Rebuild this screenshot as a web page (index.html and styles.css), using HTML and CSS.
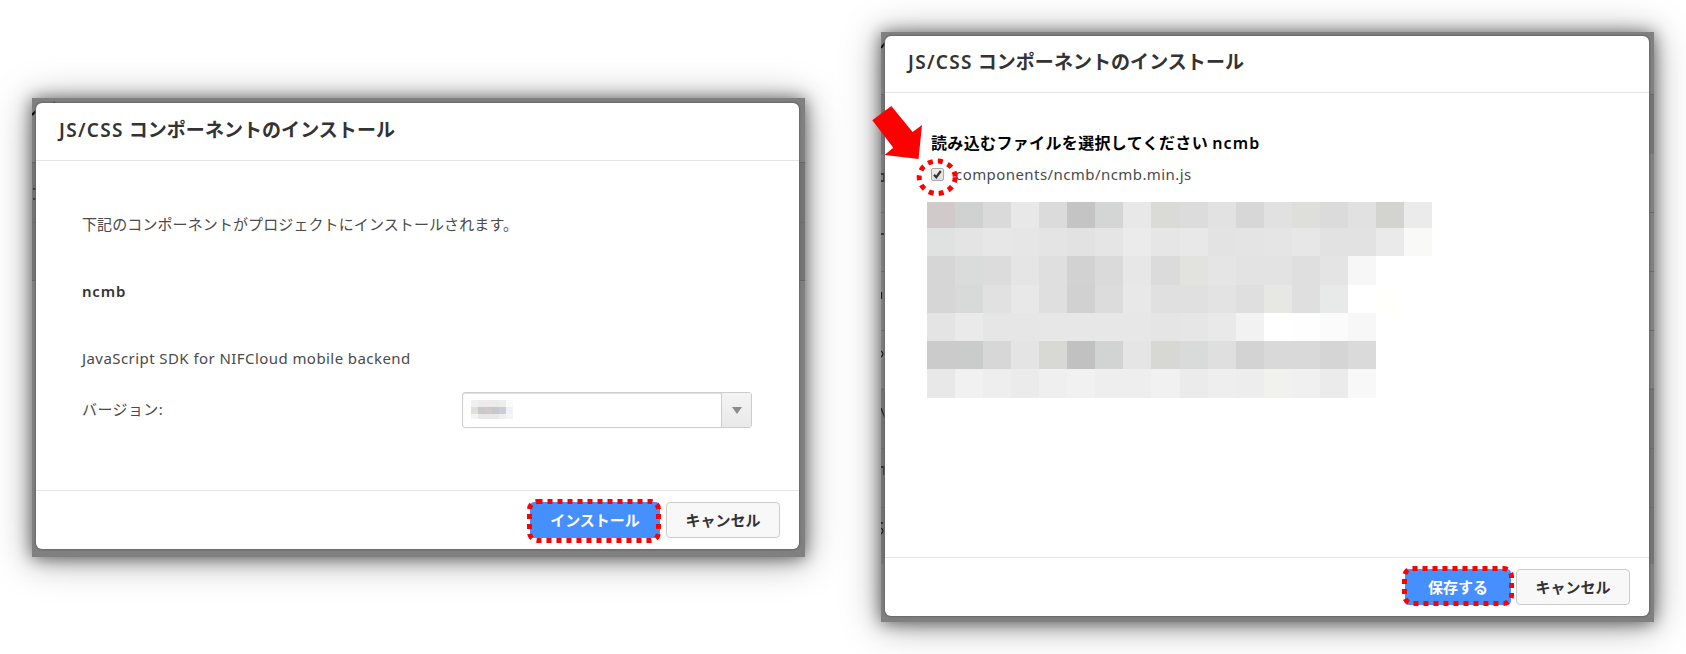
FILE: index.html
```html
<!DOCTYPE html>
<html lang="ja">
<head>
<meta charset="utf-8">
<title>JS/CSS コンポーネントのインストール</title>
<link rel="stylesheet" href="styles.css">
</head>
<body>
<section class="frame frame-install">
  <svg class="behind" width="30" height="110" viewBox="0 0 30 110"><path d="M0 17L4 13M21.500 4L23 6" stroke="#000" stroke-width="2"/><path d="M1 91H4M1 101H4" stroke="#000"/></svg>
  <div class="dialog">
    <header class="head"><h1><span class="lat">JS/CSS</span> <span class="jp">コンポーネントのインストール</span></h1></header>
    <main class="body install-body">
      <p class="message">下記のコンポーネントがプロジェクトにインストールされます。</p>
      <p class="package">ncmb</p>
      <p class="summary">JavaScript SDK for NIFCloud mobile backend</p>
      <div class="version">
        <span class="version-label">バージョン:</span>
        <div class="select">
          <div class="value">
            <svg width="58" height="20" viewBox="0 0 58 20" shape-rendering="crispEdges">
              <path fill="#f0f0f0" d="M0 1h7v7H0z"/><path fill="#ebebeb" d="M7 1h21v7H7z"/><path fill="#eee" d="M28 1h7v7h-7z"/><path fill="#fafafa" d="M35 1h7v7h-7z"/>
              <path fill="#e1ddd7" d="M0 8h7v7H0z"/><path fill="#c9c9c9" d="M7 8h7v7H7z"/><path fill="#cfcac8" d="M14 8h7v7h-7z"/><path fill="#c6c8cc" d="M21 8h7v7h-7z"/><path fill="#cbccd5" d="M28 8h7v7h-7z"/><path fill="#f0f1f8" d="M35 8h7v7h-7z"/>
              <path fill="#f0f0f0" d="M0 15h7v5H0zM35 15h7v5h-7z" opacity=".7"/><path fill="#e8e8e8" d="M7 15h21v5H7z"/><path fill="#eeeef1" d="M28 15h7v5h-7z"/>
            </svg>
          </div>
          <div class="drop"><svg width="10" height="7" viewBox="0 0 10 7"><path fill="#8c8c8c" d="M0 0H10L5 7z"/></svg></div>
        </div>
      </div>
    </main>
    <footer class="foot">
      <button class="btn primary install">インストール<svg class="mark" width="136" height="46" viewBox="0 0 136 46"><rect x="3.5" y="3.5" width="129" height="39" rx="8"/></svg></button>
      <button class="btn cancel">キャンセル</button>
    </footer>
  </div>
</section>

<section class="frame frame-files">
  <svg class="behind" width="8" height="560" viewBox="0 0 8 560"><path d="M0 16L4 11" stroke="#000" stroke-width="2"/><g fill="none" stroke="#16191d" stroke-width="1.3"><path d="M0 142H3V149H0M0 202H3M.5 260V267M0 319Q4 322 0 325M0 376L4 386M0 435H4M3 436V443M0 491H2M0 496Q4 499 0 502"/></g></svg>
  <div class="dialog">
    <header class="head"><h1><span class="lat">JS/CSS</span> <span class="jp">コンポーネントのインストール</span></h1></header>
    <main class="body files-body">
      <h2><span class="jp">読み込むファイルを選択してください</span> <span class="lat">ncmb</span></h2>
      <label class="file">
        <svg class="check" width="13" height="13" viewBox="0 0 13 13"><defs><linearGradient id="box" x2="0" y2="1"><stop stop-color="#eee"/><stop offset="1" stop-color="#ddd"/></linearGradient></defs><rect x=".5" y=".5" width="12" height="12" rx="1.5" fill="url(#box)" stroke="#a9a9a9"/><path d="M3 6.8L5.3 9.2L9.8 3" fill="none" stroke="#333" stroke-width="2.2"/></svg>
        <span>components/ncmb/ncmb.min.js</span>
      </label>
      <svg class="mosaic" width="505" height="196" viewBox="0 0 504 196" preserveAspectRatio="none" shape-rendering="crispEdges"></svg>
    </main>
    <footer class="foot">
      <button class="btn primary save">保存する<svg class="mark" width="114" height="42" viewBox="0 0 114 42"><rect x="3.5" y="3.5" width="107" height="35" rx="8"/></svg></button>
      <button class="btn cancel">キャンセル</button>
    </footer>
  </div>
  <svg class="callout" width="90" height="110" viewBox="870 100 90 110"><path fill="red" d="M872.3 120.3L891.3 106L912.6 132L922 125L918.5 159L884.5 155L893.3 147.7Z"/><ellipse cx="937.2" cy="177.3" rx="18" ry="16.2" fill="none" stroke="red" stroke-width="5" stroke-dasharray="5 5.1"/></svg>
</section>
<script src="mosaic.js"></script>
</body>
</html>
```

FILE: styles.css
```css
* { box-sizing: border-box; }
body {
  margin: 0;
  height: 654px;
  overflow: hidden;
  background: #fff;
  display: flex;
  align-items: flex-start;
  font-family: "Noto Sans", "Noto Sans CJK JP", sans-serif;
  color: #4a4a4a;
}
h1, h2, p { margin: 0; white-space: nowrap; }
.frame {
  position: relative;
  flex: none;
  width: 773px;
  background: #808080;
  box-shadow: 0 1px 16px rgba(0, 0, 0, .55), 0 3px 36px rgba(0, 0, 0, .34);
}
.frame-install {
  height: 459px;
  margin: 98px 0 0 32px;
  padding: 5px 6px 8px 4px;
  background: linear-gradient(#808080 64px, #666 64px, #666 65px, #747474 65px, #747474 124px, #6c6c6c 124px, #6c6c6c 125px, #747474 125px, #747474 182px, #666 182px, #666 183px, #808080 183px);
}
.frame-files {
  height: 590px;
  margin: 32px 0 0 76px;
  padding: 4px 5px 6px 4px;
  background:
    repeating-linear-gradient(transparent 0 58px, #6a6a6a 58px 59px) 0 122px / 100% 412px no-repeat,
    linear-gradient(#808080 62px, #6a6a6a 62px, #6a6a6a 63px, #747474 63px, #747474 122px, #808080 122px, #808080 356px, #747474 356px, #747474 532px, #808080 532px);
}
.behind { position: absolute; left: 0; top: 0; }
.dialog {
  position: relative;
  height: 100%;
  display: flex;
  flex-direction: column;
  background: #fff;
  border-radius: 6px;
  box-shadow: 0 0 2px 1px #666;
}
.head {
  height: 57px;
  flex: none;
  padding: 0 0 0 23px;
  border-bottom: 1px solid #e5e5e5;
}
.frame-install .head { height: 58px; }
h1 { font-size: 19px; line-height: 54px; font-weight: 600; color: #333; }
.frame-files h1 { line-height: 52px; }
h1 .lat { letter-spacing: 1.3px; }
h1 .jp { letter-spacing: .05px; }
.body { flex: 1; min-height: 0; }
.install-body { padding: 48px 47px 0 46px; font-size: 15px; }
.message { line-height: 30px; letter-spacing: .1px; }
.package { margin-top: 37px; line-height: 30px; font-weight: 600; color: #333; letter-spacing: .8px; }
.summary { margin-top: 37px; line-height: 30px; letter-spacing: .43px; }
.version { margin-top: 19px; display: flex; justify-content: space-between; align-items: center; }
.version-label { margin-top: -4px; letter-spacing: .4px; }
.select {
  width: 290px;
  height: 36px;
  display: flex;
  border: 1px solid #ccc;
  border-radius: 3px;
  box-shadow: inset 0 1px 1px #ddd;
}
.value { flex: 1; padding: 6px 0 0 8px; }
.value svg { display: block; }
.drop {
  width: 30px;
  display: flex;
  align-items: center;
  justify-content: center;
  border-left: 1px solid #ccc;
  background: linear-gradient(#f4f4f4, #e9e9e9);
}
.foot {
  flex: none;
  height: 59px;
  border-top: 1px solid #e5e5e5;
  padding: 11px 19px 0 0;
  display: flex;
  justify-content: flex-end;
  align-items: flex-start;
  gap: 6px;
}
.frame-files .foot { gap: 5px; }
.btn {
  position: relative;
  height: 36px;
  padding: 0;
  border: 1px solid #ccc;
  border-radius: 4px;
  background: #f8f8f8;
  color: #333;
  font: 600 15px/32px "Noto Sans", "Noto Sans CJK JP", sans-serif;
  white-space: nowrap;
}
.cancel { width: 114px; }
.primary { background: #468fff; border-color: #468fff; color: #fff; }
.install { width: 130px; }
.save { width: 106px; }
.mark { position: absolute; left: -5px; top: -5px; overflow: visible; }
.mark rect { fill: none; stroke: red; stroke-width: 5; stroke-dasharray: 5 5; }
.files-body { padding: 35px 0 0 43px; }
h2 { font-size: 16px; line-height: 30px; font-weight: 600; color: #000; padding-left: 3px; }
h2 .jp { letter-spacing: .35px; }
h2 .lat { letter-spacing: 1.2px; }
.file { display: flex; align-items: center; gap: 11px; height: 32px; padding-left: 3px; font-size: 15px; letter-spacing: .43px; }
.check { flex: none; }
.mosaic { display: block; margin: 12px 0 0 -1px; }
.callout { position: absolute; left: -11px; top: 68px; }
```

FILE: mosaic.js
```javascript
// Pixelated rows: one colour per 28px cell.
const rows = [
  [0, 26, "d0caca d0d2d1 dadada e8e8e8 dbdbdb c4c4c4 d4d6d5 e8e8e8 dadad7 dcdcdc e2e2e2 d7d7d7 e1e1e1 dededa dbdbdb e1e1e1 d3d3d0 ebebeb"],
  [26, 28, "dfe2e1 e4e4e4 e7e7e7 e6e6e6 e4e4e4 e2e2e2 e5e5e5 ebebeb e6e6e6 e8e8e8 e3e3e3 e4e4e4 e5e5e5 e7e7e7 e2e2e2 e2e2e2 eaeaea f9f9f7"],
  [54, 29, "d6d6d6 dadcdb dcdcdc e5e5e5 dfdfdf d2d2d2 dadada e7e7e7 dbdbdb e2e2df e5e5e5 e3e3e3 e3e3e3 dfdfdf e4e4e4 f7f7f7"],
  [83, 28, "d6d6d6 d7dad9 e1e1e1 e8e8e8 dfdfdf d1d1d1 dcdcdc e8e8e8 e0e0e0 e0e0e0 e3e3e3 dfdfdf e7e7e4 dfdfdf e7eae9 ffffff fffffc"],
  [111, 28, "e4e4e4 eaeaea e6e6e6 e6e6e6 e7e7e7 e7e7e7 e7e7e7 e7e7e7 e5e5e5 e6e6e6 e9e9e9 f2f2f2 ffffff fefefe fbfbfb f7f7f7"],
  [139, 28, "cbcbcb cacccb d7d7d7 e4e4e4 d8d8d4 c1c1c1 d1d4d3 e5e5e5 d7d7d3 d8dbda dfdfdf d3d3d3 d9d9d9 d9d9d9 d5d5d5 dadada"],
  [167, 29, "e8e8e8 f1f1f1 eeeeee ebebeb efefef f1f1f1 eeeeee eeeeee f1f1f1 ebebeb eeeeee ededed f1f1ee f0f0f0 ebebeb f8f8f8"]
];
const mosaic = document.querySelector(".mosaic");
for (const [y, height, colours] of rows) {
  colours.split(" ").forEach((colour, column) => {
    const cell = document.createElementNS("http://www.w3.org/2000/svg", "rect");
    cell.setAttribute("x", column * 28);
    cell.setAttribute("y", y);
    cell.setAttribute("width", 28);
    cell.setAttribute("height", height);
    cell.setAttribute("fill", "#" + colour);
    mosaic.append(cell);
  });
}
```
